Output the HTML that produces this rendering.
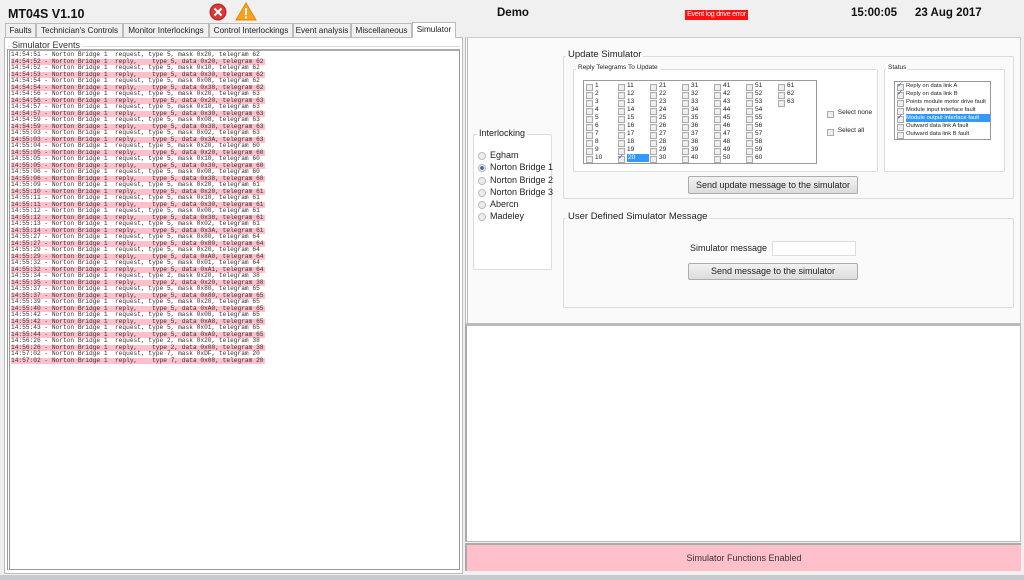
<!DOCTYPE html>
<html><head><meta charset="utf-8"><style>
*{margin:0;padding:0;box-sizing:border-box}
body{width:1024px;height:580px;background:#f0f0f0;font-family:"Liberation Sans",sans-serif;position:relative;overflow:hidden;color:#222}
.a{position:absolute}
.b{font-weight:bold;font-size:12.5px;color:#111}
.tab{position:absolute;top:23px;height:14px;border:1px solid #bbb;border-bottom:none;background:#f0f0f0;font-size:8.2px;line-height:13px;text-align:center;color:#222;white-space:nowrap;overflow:hidden}
.log{font-family:"Liberation Mono",monospace;font-size:6.2px;line-height:6.5px;color:#333}
.log div{width:254px;white-space:pre;height:6.5px}
.log .p{background:#ffc0cb}
.gb{position:absolute;border:1px solid #dcdcdc;border-radius:2px}
.gt{position:absolute;background:#fafafa;padding:0 2px;color:#222;white-space:nowrap}
.col{position:absolute;top:82px;font-size:6.5px;line-height:8px;white-space:nowrap}
.col div{height:8px;position:relative;padding-left:9px}
.col div:before{content:"";position:absolute;left:0;top:1.5px;width:5px;height:5px;border:1px solid #aaa;background:#eee}
.st{font-size:5.8px;line-height:8px;white-space:nowrap}
.st div{height:8px;position:relative;padding-left:11px}
.st div:before{content:"";position:absolute;left:2px;top:1.5px;width:5px;height:5px;border:1px solid #aaa;background:#eee}
.ck{position:absolute;left:2px;top:0;font-size:7px;color:#35c}
.btn{position:absolute;border:1px solid #adadad;background:linear-gradient(#f2f2f2,#dcdcdc);font-size:9px;text-align:center;border-radius:2px;white-space:nowrap}
.rad{position:absolute;left:478px;font-size:9px;line-height:12px;white-space:nowrap}
.rad div{height:12.3px;position:relative;padding-left:12px}
.rad div:before{content:"";position:absolute;left:0;top:3px;width:6px;height:6px;border-radius:50%;border:1px solid #bbb;background:#eee}
.rad div.s:before{background:radial-gradient(#3a6ea5 40%,#eee 50%)}
</style></head><body>
<div class="a b" style="left:8px;top:7px">MT04S V1.10</div>
<svg class="a" style="left:208px;top:2px" width="20" height="20"><circle cx="10" cy="10" r="8.5" fill="#c0282b"/><circle cx="10" cy="10" r="7" fill="#d93a3a"/><path d="M6.5 6.5l7 7M13.5 6.5l-7 7" stroke="#fff" stroke-width="2"/></svg>
<svg class="a" style="left:235px;top:2px" width="22" height="19"><path d="M11 1L21 18H1Z" fill="#f7a21b" stroke="#e08a00"/><rect x="10" y="6" width="2" height="7" fill="#fff"/><rect x="10" y="14.5" width="2" height="2" fill="#fff"/></svg>
<div class="a b" style="left:497px;top:7px;font-size:11.5px">Demo</div>
<div class="a" style="left:685px;top:10px;width:63px;height:10px;background:#ff1010;color:#fff;font-size:7px;line-height:10px;text-align:center;white-space:nowrap;overflow:hidden;letter-spacing:-0.2px">Event log drive error</div>
<div class="a b" style="left:851px;top:7px;font-size:11.5px">15:00:05</div>
<div class="a b" style="left:915px;top:7px;font-size:11.5px">23 Aug 2017</div>

<div class="tab" style="left:5px;width:31px">Faults</div>
<div class="tab" style="left:36px;width:87px">Technician's Controls</div>
<div class="tab" style="left:123px;width:86px">Monitor Interlockings</div>
<div class="tab" style="left:209px;width:84px">Control Interlockings</div>
<div class="tab" style="left:293px;width:58px">Event analysis</div>
<div class="tab" style="left:351px;width:61px">Miscellaneous</div>
<div class="tab" style="left:412px;width:44px;top:22px;height:16px;background:#fff;z-index:2">Simulator</div>

<div class="a" style="left:4px;top:37px;width:459px;height:537px;background:#fff;border:1px solid #bbb"></div>
<div class="a" style="left:8px;top:46px;width:452px;height:2px;border-top:1px solid #ddd"></div>
<div class="a" style="left:10px;top:40px;font-size:9px;background:#fff;padding:0 2px;color:#333">Simulator Events</div>
<div class="a" style="left:7px;top:49px;width:453px;height:521px;border:1px solid #999;border-left:3px double #999;border-top:2px solid #aaa;background:#fff"></div>
<div class="a log" style="left:11px;top:52px"><div>14:54:51 - Norton Bridge 1  request, type 5, mask 0x20, telegram 62</div><div class="p">14:54:52 - Norton Bridge 1  reply,    type 5, data 0x20, telegram 62</div><div>14:54:52 - Norton Bridge 1  request, type 5, mask 0x10, telegram 62</div><div class="p">14:54:53 - Norton Bridge 1  reply,    type 5, data 0x30, telegram 62</div><div>14:54:54 - Norton Bridge 1  request, type 5, mask 0x08, telegram 62</div><div class="p">14:54:54 - Norton Bridge 1  reply,    type 5, data 0x38, telegram 62</div><div>14:54:56 - Norton Bridge 1  request, type 5, mask 0x20, telegram 63</div><div class="p">14:54:56 - Norton Bridge 1  reply,    type 5, data 0x20, telegram 63</div><div>14:54:57 - Norton Bridge 1  request, type 5, mask 0x10, telegram 63</div><div class="p">14:54:57 - Norton Bridge 1  reply,    type 5, data 0x30, telegram 63</div><div>14:54:59 - Norton Bridge 1  request, type 5, mask 0x08, telegram 63</div><div class="p">14:54:59 - Norton Bridge 1  reply,    type 5, data 0x38, telegram 63</div><div>14:55:03 - Norton Bridge 1  request, type 5, mask 0x02, telegram 63</div><div class="p">14:55:03 - Norton Bridge 1  reply,    type 5, data 0x3A, telegram 63</div><div>14:55:04 - Norton Bridge 1  request, type 5, mask 0x20, telegram 60</div><div class="p">14:55:05 - Norton Bridge 1  reply,    type 5, data 0x20, telegram 60</div><div>14:55:05 - Norton Bridge 1  request, type 5, mask 0x10, telegram 60</div><div class="p">14:55:05 - Norton Bridge 1  reply,    type 5, data 0x30, telegram 60</div><div>14:55:06 - Norton Bridge 1  request, type 5, mask 0x08, telegram 60</div><div class="p">14:55:06 - Norton Bridge 1  reply,    type 5, data 0x38, telegram 60</div><div>14:55:09 - Norton Bridge 1  request, type 5, mask 0x20, telegram 61</div><div class="p">14:55:10 - Norton Bridge 1  reply,    type 5, data 0x20, telegram 61</div><div>14:55:11 - Norton Bridge 1  request, type 5, mask 0x10, telegram 61</div><div class="p">14:55:11 - Norton Bridge 1  reply,    type 5, data 0x30, telegram 61</div><div>14:55:12 - Norton Bridge 1  request, type 5, mask 0x08, telegram 61</div><div class="p">14:55:12 - Norton Bridge 1  reply,    type 5, data 0x38, telegram 61</div><div>14:55:13 - Norton Bridge 1  request, type 5, mask 0x02, telegram 61</div><div class="p">14:55:14 - Norton Bridge 1  reply,    type 5, data 0x3A, telegram 61</div><div>14:55:27 - Norton Bridge 1  request, type 5, mask 0x80, telegram 64</div><div class="p">14:55:27 - Norton Bridge 1  reply,    type 5, data 0x80, telegram 64</div><div>14:55:29 - Norton Bridge 1  request, type 5, mask 0x20, telegram 64</div><div class="p">14:55:29 - Norton Bridge 1  reply,    type 5, data 0xA0, telegram 64</div><div>14:55:32 - Norton Bridge 1  request, type 5, mask 0x01, telegram 64</div><div class="p">14:55:32 - Norton Bridge 1  reply,    type 5, data 0xA1, telegram 64</div><div>14:55:34 - Norton Bridge 1  request, type 2, mask 0x20, telegram 38</div><div class="p">14:55:35 - Norton Bridge 1  reply,    type 2, data 0x20, telegram 38</div><div>14:55:37 - Norton Bridge 1  request, type 5, mask 0x80, telegram 65</div><div class="p">14:55:37 - Norton Bridge 1  reply,    type 5, data 0x80, telegram 65</div><div>14:55:39 - Norton Bridge 1  request, type 5, mask 0x20, telegram 65</div><div class="p">14:55:40 - Norton Bridge 1  reply,    type 5, data 0xA0, telegram 65</div><div>14:55:42 - Norton Bridge 1  request, type 5, mask 0x08, telegram 65</div><div class="p">14:55:42 - Norton Bridge 1  reply,    type 5, data 0xA8, telegram 65</div><div>14:55:43 - Norton Bridge 1  request, type 5, mask 0x01, telegram 65</div><div class="p">14:55:44 - Norton Bridge 1  reply,    type 5, data 0xA9, telegram 65</div><div>14:56:26 - Norton Bridge 1  request, type 2, mask 0x20, telegram 38</div><div class="p">14:56:26 - Norton Bridge 1  reply,    type 2, data 0x00, telegram 38</div><div>14:57:02 - Norton Bridge 1  request, type 7, mask 0xDF, telegram 20</div><div class="p">14:57:02 - Norton Bridge 1  reply,    type 7, data 0x08, telegram 20</div></div>

<div class="a" style="left:465px;top:37px;width:556px;height:287px;background:#fafafa;border:1px solid #ccc;border-left:3px double #bbb"></div>
<div class="a" style="left:465px;top:323px;width:556px;height:219px;background:#fff;border:1px solid #bbb;border-top:3px solid #bbb;border-left:2px solid #aaa"></div>
<div class="a" style="left:465px;top:543px;width:556px;height:28px;background:#ffc0cb;border-top:2px solid #aaa;border-left:2px solid #aaa;font-size:9px;line-height:26px;text-align:center;color:#333">Simulator Functions Enabled</div>
<div class="a" style="left:0;top:575px;width:1024px;height:5px;background:#c8cbcd"></div>

<div class="gb" style="left:473px;top:134px;width:79px;height:136px;background:#fff"></div>
<div class="gt" style="left:477px;top:128px;font-size:9px;background:#fafafa">Interlocking</div>
<div class="rad" style="top:149px">
<div>Egham</div><div class="s">Norton Bridge 1</div><div>Norton Bridge 2</div><div>Norton Bridge 3</div><div>Abercn</div><div>Madeley</div>
</div>

<div class="gb" style="left:563px;top:56px;width:451px;height:143px"></div>
<div class="gt" style="left:566px;top:49px;font-size:9.5px">Update Simulator</div>
<div class="gb" style="left:573px;top:69px;width:305px;height:103px;background:#fff"></div>
<div class="gt" style="left:576px;top:64px;font-size:6.5px;background:#fff">Reply Telegrams To Update</div>
<div class="a" style="left:583px;top:80px;width:234px;height:84px;border:1px solid #999;background:#fff"></div>
<div class="col" style="left:586px"><div>1</div><div>2</div><div>3</div><div>4</div><div>5</div><div>6</div><div>7</div><div>8</div><div>9</div><div>10</div></div>
<div class="col" style="left:618px"><div>11</div><div>12</div><div>13</div><div>14</div><div>15</div><div>16</div><div>17</div><div>18</div><div>19</div><div><span style="position:absolute;left:0;top:0;font-size:7px;color:#35c">✓</span><span style="background:#3399ff;color:#fff;display:inline-block;width:22px;padding-left:1px">20</span></div></div>
<div class="col" style="left:650px"><div>21</div><div>22</div><div>23</div><div>24</div><div>25</div><div>26</div><div>27</div><div>28</div><div>29</div><div>30</div></div>
<div class="col" style="left:682px"><div>31</div><div>32</div><div>33</div><div>34</div><div>35</div><div>36</div><div>37</div><div>38</div><div>39</div><div>40</div></div>
<div class="col" style="left:714px"><div>41</div><div>42</div><div>43</div><div>44</div><div>45</div><div>46</div><div>47</div><div>48</div><div>49</div><div>50</div></div>
<div class="col" style="left:746px"><div>51</div><div>52</div><div>53</div><div>54</div><div>55</div><div>56</div><div>57</div><div>58</div><div>59</div><div>60</div></div>
<div class="col" style="left:778px"><div>61</div><div>62</div><div>63</div></div>
<div class="col" style="left:827px;top:109px"><div>&nbsp;Select none</div></div>
<div class="col" style="left:827px;top:127px"><div>&nbsp;Select all</div></div>

<div class="gb" style="left:884px;top:69px;width:121px;height:103px;background:#fff"></div>
<div class="gt" style="left:886px;top:64px;font-size:6.5px;background:#fff">Status</div>
<div class="a st" style="left:894px;top:81px;width:97px;height:59px;border:1px solid #999;background:#fff;overflow:hidden">
<div><span class="ck">✓</span>Reply on data link A</div>
<div><span class="ck">✓</span>Reply on data link B</div>
<div>Points module motor drive fault</div>
<div>Module input interface fault</div>
<div><span class="ck">✓</span><span style="background:#3399ff;color:#fff;display:inline-block;width:84px">Module output interface fault</span></div>
<div>Outward data link A fault</div>
<div>Outward data link B fault</div>
</div>
<div class="btn" style="left:688px;top:176px;width:170px;height:18px;line-height:16px">Send update message to the simulator</div>

<div class="gb" style="left:563px;top:218px;width:451px;height:90px"></div>
<div class="gt" style="left:566px;top:211px;font-size:9.5px">User Defined Simulator Message</div>
<div class="a" style="left:690px;top:243px;font-size:9px">Simulator message</div>
<div class="a" style="left:772px;top:241px;width:84px;height:15px;border:1px solid #ddd;background:#fff"></div>
<div class="btn" style="left:688px;top:263px;width:170px;height:17px;line-height:15px">Send message to the simulator</div>
</body></html>
